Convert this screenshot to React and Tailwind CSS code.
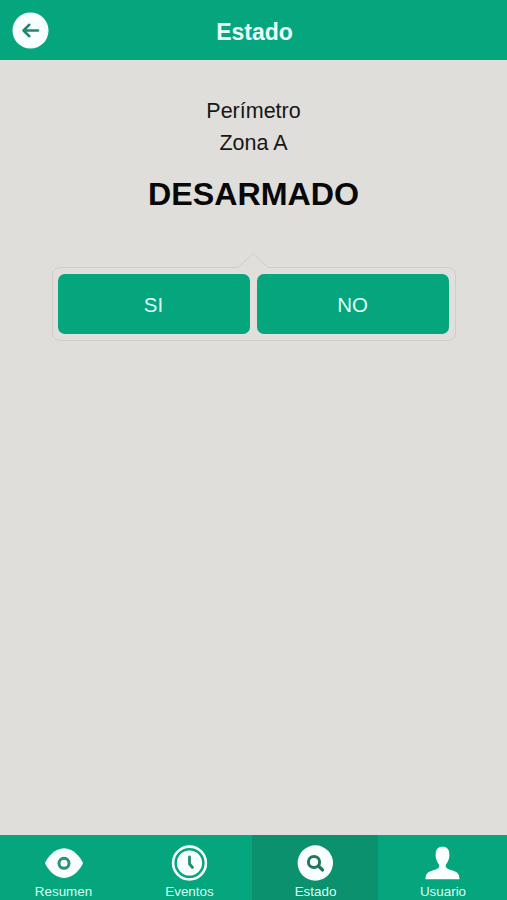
import React, { useState } from 'react';

const EyeIcon = () => (
  <svg className="w-[40px] h-[36px]" viewBox="0 0 40 36">
    <path d="M1 18C3.500 12 11 3.200 20 3.200S36.500 12 39 18C36.500 24.500 29 33 20 33S3.500 24.500 1 18Z" fill="currentColor" />
    <circle cx="20" cy="18.300" r="5" fill="none" stroke="#2f8f78" strokeWidth="3" />
  </svg>
);

const ClockIcon = () => (
  <svg className="w-[40px] h-[36px]" viewBox="0 0 40 36">
    <circle cx="19.500" cy="18" r="16.400" fill="none" stroke="currentColor" strokeWidth="2.600" />
    <circle cx="19.500" cy="18" r="12.600" fill="currentColor" />
    <path d="M19.500 12v7l3 3.500" fill="none" stroke="#258d73" strokeWidth="2.800" strokeLinecap="round" strokeLinejoin="round" />
  </svg>
);

const SearchIcon = () => (
  <svg className="w-[40px] h-[36px]" viewBox="0 0 40 36">
    <circle cx="19.300" cy="18" r="17.700" fill="currentColor" />
    <circle cx="18" cy="17" r="5.600" fill="none" stroke="#24765f" strokeWidth="3" />
    <path d="M22.400 21l4.200 4" fill="none" stroke="#24765f" strokeWidth="3.200" strokeLinecap="round" />
  </svg>
);

const UserIcon = () => (
  <svg className="w-[40px] h-[36px]" viewBox="0 0 40 36">
    <path d="M19.500 1.800C15 1.800 12.700 4.500 12.700 8.800c0 1.200-.2 3.800.5 5.300.7 2.400 1.800 4.200 3 5.600v2c-.8 1.800-3.400 2.600-6.800 3.900C4.500 27.300 2.600 29 2.500 34.300h34c-.1-5.300-2-7-6.900-8.700-3.400-1.300-6-2.100-6.800-3.900v-2c1.200-1.400 2.300-3.200 3-5.600.7-1.500.5-4.100.5-5.300 0-4.300-2.300-7-6.800-7Z" fill="currentColor" />
  </svg>
);

const TABS = [
  { id: 'resumen', label: 'Resumen', icon: EyeIcon },
  { id: 'eventos', label: 'Eventos', icon: ClockIcon },
  { id: 'estado', label: 'Estado', icon: SearchIcon },
  { id: 'usuario', label: 'Usuario', icon: UserIcon },
];

export default function App() {
  const [activeTab, setActiveTab] = useState('estado');

  return (
    <div className="h-screen flex flex-col bg-[#dfdeda] font-['Liberation_Sans',Arial,sans-serif]">
      {/* Header */}
      <header className="h-[60px] shrink-0 grid grid-cols-[60px_1fr_60px] items-center bg-[#05a57e] text-[#edfffb]">
        <button className="ml-3 mt-px w-[37px] h-[37px]" aria-label="Volver">
          <svg className="w-full h-full" viewBox="0 0 37 37">
            <circle cx="18.500" cy="18.500" r="18" fill="#f8fffe" />
            <path d="M26 18.500H11.500M17.300 12.800l-5.800 5.700 5.800 5.700" fill="none" stroke="#21886e" strokeWidth="2.600" strokeLinecap="round" strokeLinejoin="round" />
          </svg>
        </button>
        <h1 className="pt-[3px] pl-[2px] text-center text-[23px] leading-7 font-bold">Estado</h1>
      </header>

      <main className="flex-1 flex flex-col items-center pt-[35px]">
        <p className="text-[21.500px] leading-8 text-[#171717]">Perímetro</p>
        <p className="text-[21.500px] leading-8 text-[#171717]">Zona A</p>
        <h2 className="mt-[15px] text-[32.200px] leading-[40px] font-bold text-[#080808]">DESARMADO</h2>

        {/* Confirmation popup */}
        <div className="relative mt-[53px] w-[404px] h-[74px] flex gap-[7px] p-[6px] pl-[5px] border border-[#cfcecb] rounded-lg bg-[#e0dfdb]">
          <svg className="absolute left-[183px] -top-[15px] w-[34px] h-[16px]" viewBox="0 0 34 16">
            <path d="M1 15.500L17 .8l16 14.700v.5H1Z" fill="#e0dfdb" />
            <path d="M1 14.500h1L17 .8l15 13.700h1" fill="none" stroke="#cfcecb" />
          </svg>
          <button className="flex-1 rounded-[7px] bg-[#05a57e] text-[20.500px] text-[#dcfff5] pt-[2px]">SI</button>
          <button className="flex-1 rounded-[7px] bg-[#05a57e] text-[20.500px] text-[#dcfff5] pt-[2px]">NO</button>
        </div>
      </main>

      {/* Bottom tab bar */}
      <nav className="h-[65px] shrink-0 grid grid-cols-[126px_126px_126px_129px] bg-[#05a57e]">
        {TABS.map(({ id, label, icon: Icon }) => (
          <button
            key={id}
            onClick={() => setActiveTab(id)}
            className={`flex flex-col items-center pt-[10px] pl-px text-[#f8fffe] ${activeTab === id ? 'bg-[#0b916d]' : ''}`}
          >
            <Icon />
            <span className="mt-[3px] text-[13.400px] leading-4 text-[#d5fff2]">{label}</span>
          </button>
        ))}
      </nav>
    </div>
  );
}
